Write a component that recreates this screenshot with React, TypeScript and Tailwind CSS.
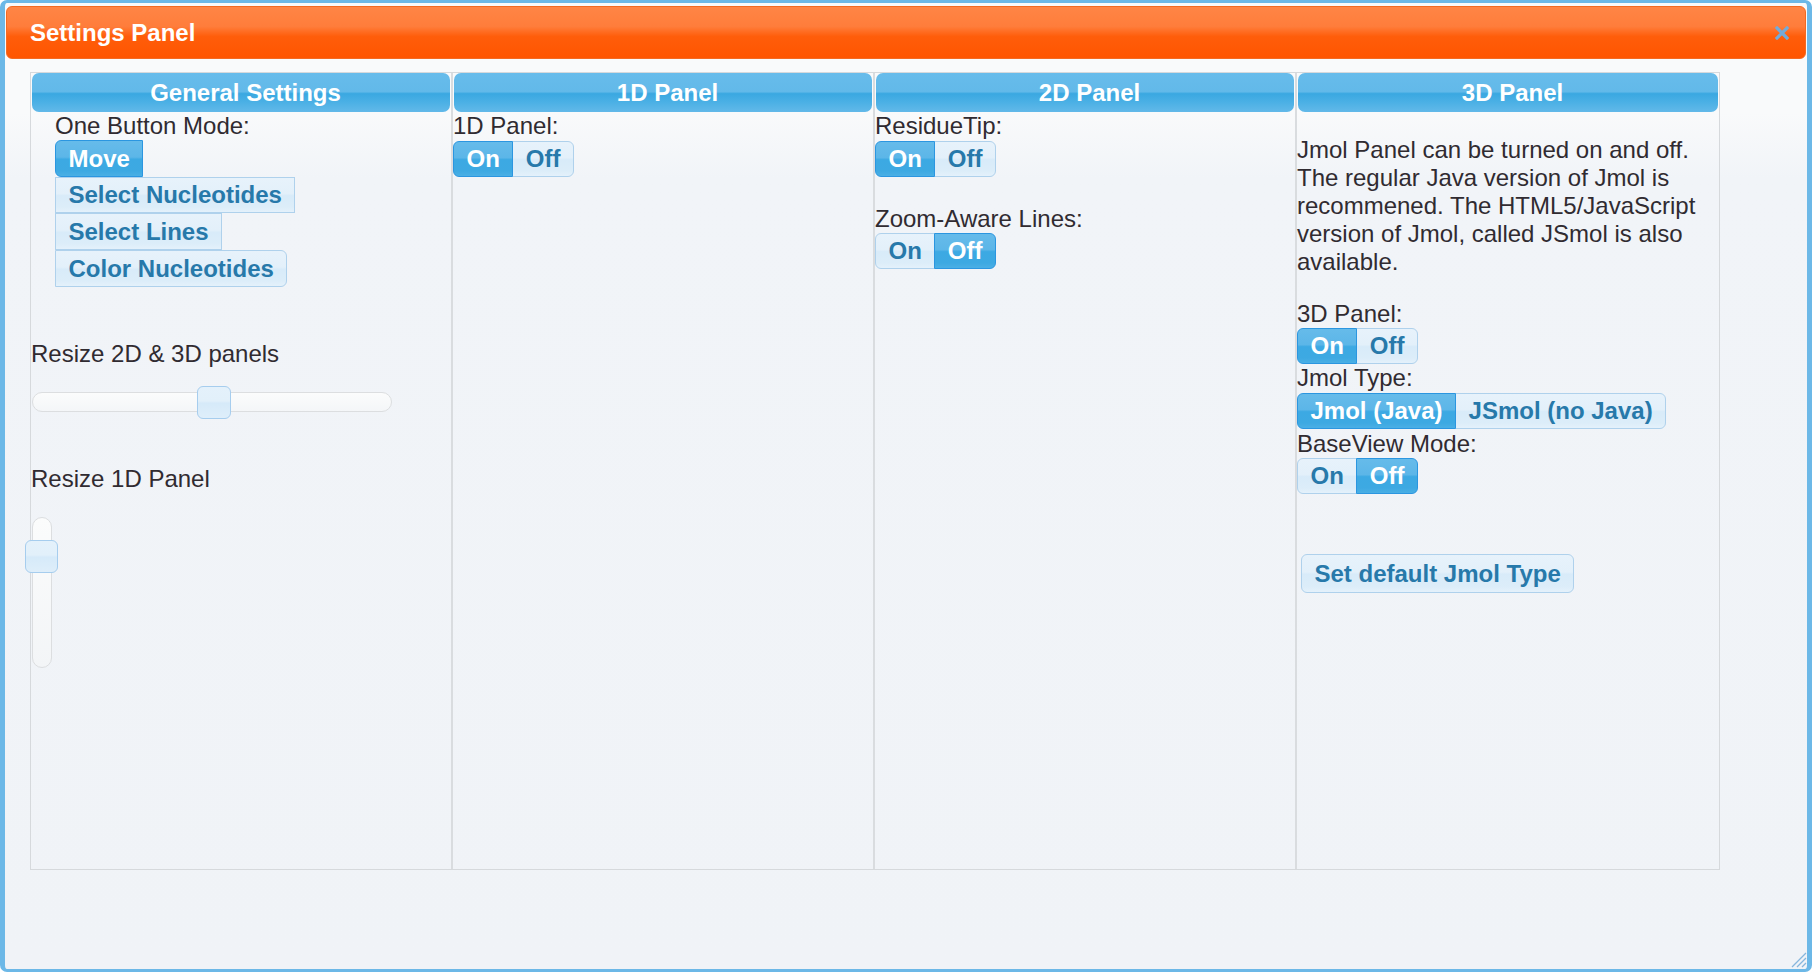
import React from "react";

const ACTIVE =
  "bg-[linear-gradient(to_bottom,#66bbea_0%,#5cb6e8_46%,#3ca9e3_52%,#3da9e2_85%,#4aafe5_100%)] border-[#2b96e0] text-white z-10";
const INACTIVE =
  "bg-[linear-gradient(to_bottom,#e7f2fb_0%,#e3f0fa_46%,#d8ebf9_52%,#dcedf9_85%,#e4f1fb_100%)] border-[#afd1ec] text-[#2779aa]";

function Btn({
  label,
  active,
  extra,
}: {
  label: string;
  active?: boolean;
  extra?: string;
}) {
  return (
    <span
      className={
        "relative inline-flex items-center border px-[12.5px] font-bold text-[24px] leading-none whitespace-nowrap " +
        (active ? ACTIVE : INACTIVE) +
        " " +
        (extra || "")
      }
    >
      {label}
    </span>
  );
}

function Toggle({
  items,
  active,
  extra,
}: {
  items: string[];
  active: number;
  extra?: string;
}) {
  return (
    <div className={"flex " + (extra || "")}>
      {items.map((it, i) => (
        <Btn
          key={it}
          label={it}
          active={i === active}
          extra={
            "h-[36px] " +
            (i === 0 ? "rounded-l-[6px]" : "-ml-px") +
            (i === items.length - 1 ? " rounded-r-[6px]" : "")
          }
        />
      ))}
    </div>
  );
}

function Header({ title }: { title: string }) {
  return (
    <div className="mx-px h-[39px] shrink-0 rounded-[7px] bg-[linear-gradient(to_bottom,#67bceb_0%,#62b9e9_48%,#3aa8e1_53%,#4bb0e5_75%,#62b9e9_100%)] flex items-center justify-center pl-[9px] text-white font-bold text-[24px] leading-none">
      {title}
    </div>
  );
}

const HANDLE =
  "absolute rounded-[6px] border border-[#a6cdee] bg-[linear-gradient(to_bottom,#e4f1fb_0%,#e2f0fa_45%,#d6eaf9_52%,#deeefa_100%)]";

export default function App() {
  return (
    <div className="w-[1812px] h-[972px] font-['Liberation_Sans',Arial,sans-serif] text-[24px] leading-[28px] text-[#302b31]">
      <div className="relative flex h-full w-full flex-col rounded-[7px] border-x-[5px] border-t-[3px] border-b-[3px] border-[#6cb8e7] px-px pt-[3px] bg-[linear-gradient(to_bottom,#f9fafb_0px,#f9fafb_110px,#f1f4f8_175px,#f0f3f7_100%)]">
        {/* Title bar */}
        <div className="flex h-[53px] shrink-0 items-center justify-between rounded-[6px] border border-[#f36a22] bg-[linear-gradient(to_bottom,#ff8545_0%,#ff7d3b_38%,#ff5d0a_58%,#ff5500_100%)] pl-[23px] pr-[16px]">
          <span className="text-[24px] font-bold leading-none text-white">
            Settings Panel
          </span>
          <svg width="14" height="14" viewBox="0 0 14 14">
            <path
              d="M2 2 L12 12 M12 2 L2 12"
              stroke="#74abd9"
              strokeWidth="3.2"
              strokeLinecap="square"
            />
          </svg>
        </div>

        {/* Tabs box */}
        <div className="ml-[24px] mt-[13px] grid h-[798px] w-[1690px] grid-cols-4 border border-[#d6d9dc]">
          {/* General Settings */}
          <div className="flex flex-col border-r-2 border-[#d9dcdf]">
            <Header title="General Settings" />
            <div className="pl-[24px]">
              <div>One Button Mode:</div>
              <div className="flex flex-col items-start">
                <Btn label="Move" active extra="h-[37px] rounded-l-[6px]" />
                <Btn label="Select Nucleotides" extra="h-[36px]" />
                <Btn label="Select Lines" extra="h-[37px]" />
                <Btn label="Color Nucleotides" extra="h-[37px] rounded-r-[6px]" />
              </div>
            </div>
            <div className="mt-[53px]">Resize 2D &amp; 3D panels</div>
            <div className="relative ml-px mt-[24px] h-[20px] w-[360px] rounded-full border border-[#dcdee0] bg-[linear-gradient(to_bottom,#fbfcfc,#f4f6f8)]">
              <div className={HANDLE + " left-[164px] top-[-7px] h-[33px] w-[34px]"} />
            </div>
            <div className="mt-[53px]">Resize 1D Panel</div>
            <div className="relative ml-px mt-[24px] h-[151px] w-[20px] rounded-full border border-[#dcdee0] bg-[linear-gradient(to_bottom,#fbfcfc,#f3f5f7)]">
              <div className={HANDLE + " left-[-8px] top-[22px] h-[33px] w-[33px]"} />
            </div>
          </div>

          {/* 1D Panel */}
          <div className="flex flex-col border-r-2 border-[#d9dcdf]">
            <Header title="1D Panel" />
            <div>1D Panel:</div>
            <Toggle items={["On", "Off"]} active={0} extra="mt-px" />
          </div>

          {/* 2D Panel */}
          <div className="flex flex-col border-r-2 border-[#d9dcdf]">
            <Header title="2D Panel" />
            <div>ResidueTip:</div>
            <Toggle items={["On", "Off"]} active={0} extra="mt-px" />
            <div className="mt-[28px]">Zoom-Aware Lines:</div>
            <Toggle items={["On", "Off"]} active={1} />
          </div>

          {/* 3D Panel */}
          <div className="flex flex-col items-start">
            <div className="w-full">
              <Header title="3D Panel" />
            </div>
            <p className="mt-[24px] w-full pr-[4px]">
              Jmol Panel can be turned on and off. The regular Java version of
              Jmol is recommened. The HTML5/JavaScript version of Jmol, called
              JSmol is also available.
            </p>
            <div className="mt-[24px]">3D Panel:</div>
            <Toggle items={["On", "Off"]} active={0} />
            <div>Jmol Type:</div>
            <Toggle items={["Jmol (Java)", "JSmol (no Java)"]} active={0} extra="mt-px" />
            <div className="mt-px">BaseView Mode:</div>
            <Toggle items={["On", "Off"]} active={1} />
            <Btn
              label="Set default Jmol Type"
              extra="ml-[4px] mt-[60px] h-[39px] rounded-[6px]"
            />
          </div>
        </div>

        {/* resize grip */}
        <svg
          className="absolute bottom-[1px] right-[0px]"
          width="17"
          height="17"
          viewBox="0 0 17 17"
        >
          <path
            d="M16 2 L2 16 M16 7 L7 16 M16 12 L12 16"
            stroke="#86b6dd"
            strokeWidth="1.3"
          />
        </svg>
      </div>
    </div>
  );
}
